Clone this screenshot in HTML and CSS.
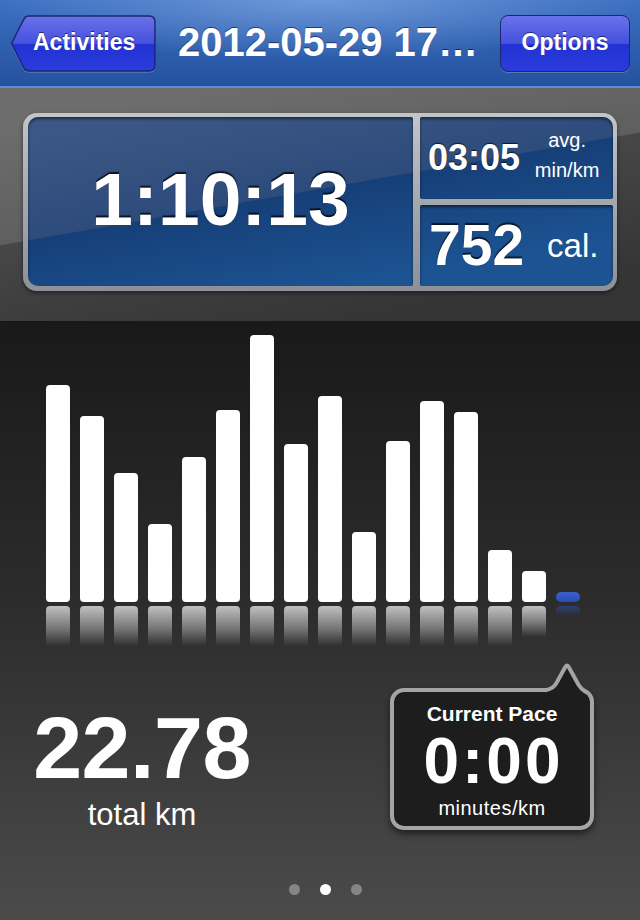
FILE: index.html
```html
<!DOCTYPE html>
<html lang="en">
<head>
<meta charset="utf-8">
<title>Activity 2012-05-29</title>
<link rel="stylesheet" href="styles.css">
</head>
<body>
<div class="screen">
  <header class="navbar">
    <a class="nav-btn back-btn">
      <svg class="back-shape" width="146" height="57" viewBox="0 0 146 57" aria-hidden="true">
        <defs>
          <linearGradient id="btnGrad" x1="0" y1="0" x2="0" y2="1">
            <stop offset="0" stop-color="#6a72ea"/>
            <stop offset="0.5" stop-color="#4550de"/>
            <stop offset="0.5" stop-color="#2232d2"/>
            <stop offset="1" stop-color="#2b3cdc"/>
          </linearGradient>
        </defs>
        <path d="M1.5 28.5 L14 3.8 Q15.5 1 19 1 L139 1 Q145 1 145 7 L145 50 Q145 56 139 56 L19 56 Q15.5 56 14 53.2 Z" fill="url(#btnGrad)" stroke="#1c2672" stroke-width="1.5"/>
      </svg>
      <span class="btn-label">Activities</span>
    </a>
    <h1 class="title">2012-05-29 17…</h1>
    <a class="nav-btn options-btn"><span class="btn-label">Options</span></a>
  </header>

  <section class="stats">
    <div class="panel">
      <div class="cell duration">1:10:13</div>
      <div class="cell pace">
        <span class="pace-val">03:05</span>
        <span class="pace-unit"><span>avg.</span><span>min/km</span></span>
      </div>
      <div class="cell calories">
        <span class="cal-val">752</span>
        <span class="cal-unit">cal.</span>
      </div>
    </div>
  </section>

  <section class="chart-area">
    <div class="chart">
      <div class="bar" style="height:217px"></div><div class="refl" style="height:40px"></div>
      <div class="bar" style="height:186px"></div><div class="refl" style="height:40px"></div>
      <div class="bar" style="height:129px"></div><div class="refl" style="height:40px"></div>
      <div class="bar" style="height:78px"></div><div class="refl" style="height:40px"></div>
      <div class="bar" style="height:145px"></div><div class="refl" style="height:40px"></div>
      <div class="bar" style="height:192px"></div><div class="refl" style="height:40px"></div>
      <div class="bar" style="height:267px"></div><div class="refl" style="height:40px"></div>
      <div class="bar" style="height:158px"></div><div class="refl" style="height:40px"></div>
      <div class="bar" style="height:206px"></div><div class="refl" style="height:40px"></div>
      <div class="bar" style="height:70px"></div><div class="refl" style="height:40px"></div>
      <div class="bar" style="height:161px"></div><div class="refl" style="height:40px"></div>
      <div class="bar" style="height:201px"></div><div class="refl" style="height:40px"></div>
      <div class="bar" style="height:190px"></div><div class="refl" style="height:40px"></div>
      <div class="bar" style="height:52px"></div><div class="refl" style="height:40px"></div>
      <div class="bar" style="height:31px"></div><div class="refl" style="height:31px"></div>
      <div class="bar bar-current" style="height:10px"></div><div class="refl refl-current" style="height:10px"></div>
    </div>

    <div class="summary">
      <div class="distance">
        <div class="distance-val">22.78</div>
        <div class="distance-unit">total km</div>
      </div>
      <div class="bubble">
        <svg class="bubble-tail" width="60" height="42" viewBox="0 0 60 42" aria-hidden="true">
          <path d="M7 30 Q14 29 17 22 L25 7.5 Q27 3.5 29 7.5 L37 22 Q40 29 48.5 33.5 L44 41 L7 41 Z" fill="#1d1d1d"/>
          <path d="M5 30.2 Q14 29 17 22 L25 7.5 Q27 3.5 29 7.5 L37 22 Q40 29 48.5 33.5" fill="none" stroke="#a4a4a4" stroke-width="4" stroke-linejoin="round"/>
        </svg>
        <div class="bubble-title">Current Pace</div>
        <div class="bubble-val">0:00</div>
        <div class="bubble-unit">minutes/km</div>
      </div>
    </div>

    <div class="dots">
      <span class="dot"></span>
      <span class="dot active"></span>
      <span class="dot"></span>
    </div>
  </section>
</div>
</body>
</html>
```

FILE: styles.css
```css
html, body {
  margin: 0;
  padding: 0;
  background: #1a1a1a;
}

body {
  font-family: "Liberation Sans", Arial, Helvetica, sans-serif;
  color: #fff;
}

.screen {
  width: 640px;
  height: 920px;
  overflow: hidden;
  display: flex;
  flex-direction: column;
}

/* ---------- Nav bar ---------- */
.navbar {
  height: 71px;
  flex: 0 0 auto;
  border-bottom: 2px solid #5a8edb;
  display: flex;
  align-items: flex-start;
  padding: 15px 10px 0 10px;
  box-sizing: content-box;
  width: 620px;
  background:
    radial-gradient(ellipse 330px 60px at 50% 0, rgba(150, 185, 235, 0.55), rgba(150, 185, 235, 0) 100%),
    linear-gradient(180deg, #3d70c2 0%, #3062b2 45%, #24529f 100%);
}

.nav-btn {
  display: block;
  height: 57px;
  position: relative;
  color: #fff;
  text-decoration: none;
  flex: 0 0 auto;
}

.btn-label {
  position: relative;
  display: block;
  font-size: 23px;
  font-weight: bold;
  line-height: 54px;
  text-shadow: 0 -1px 0 rgba(0, 0, 20, 0.55);
}

.back-btn {
  width: 146px;
}

.back-shape {
  position: absolute;
  left: 0;
  top: 0;
  filter: drop-shadow(0 1px 0 rgba(255, 255, 255, 0.22));
}

.back-btn .btn-label {
  padding-left: 23px;
}

.options-btn {
  width: 130px;
  box-sizing: border-box;
  border: 1.5px solid #1c2672;
  border-radius: 8px;
  text-align: center;
  background: linear-gradient(180deg, #6a72ea 0%, #4550de 50%, #2232d2 50%, #2b3cdc 100%);
  box-shadow: 0 1px 0 rgba(255, 255, 255, 0.22);
}

.options-btn .btn-label {
  line-height: 52px;
}

.title {
  flex: 1 1 auto;
  margin: 0;
  text-align: center;
  font-size: 40px;
  font-weight: bold;
  line-height: 54px;
  white-space: nowrap;
  text-shadow: 0 -1px 0 rgba(0, 0, 30, 0.55);
}

/* ---------- Stats panel ---------- */
.stats {
  height: 233px;
  flex: 0 0 auto;
  box-sizing: border-box;
  padding: 25px 23px 0 23px;
  background: linear-gradient(170deg, #6d6d6d 12%, #5f5f5f 23.7%, #474747 23.8%, #353535 37%) fixed;
}

.panel {
  display: grid;
  grid-template-columns: 385px 193px;
  grid-template-rows: 82px 81px;
  column-gap: 7px;
  row-gap: 6px;
  padding: 4px 4px 5px 5px;
  border-radius: 14px;
  background: linear-gradient(180deg, #c3c5c9 0%, #a4a7ac 50%, #8d9096 100%);
  box-shadow: 0 2px 4px rgba(0, 0, 0, 0.45);
}

.cell {
  background: linear-gradient(170deg, #3b5785 14%, #2d4b7b 23.7%, #163f78 23.8%, #1c5392 33.6%) fixed;
  box-shadow: inset 0 2px 3px rgba(0, 0, 0, 0.5);
  display: flex;
  align-items: center;
  font-weight: bold;
}

.duration {
  grid-row: 1 / span 2;
  grid-column: 1;
  border-radius: 10px 2px 2px 10px;
  justify-content: center;
  font-size: 75px;
  line-height: 75px;
  padding-bottom: 4px;
  box-sizing: border-box;
  text-shadow: 0 -2px 1px rgba(0, 0, 0, 0.75);
}

.pace {
  grid-column: 2;
  grid-row: 1;
  border-radius: 2px 10px 2px 2px;
  padding-left: 8px;
}

.pace-val {
  font-size: 36px;
  line-height: 36px;
  text-shadow: 0 -1px 1px rgba(0, 0, 0, 0.7);
}

.pace-unit {
  display: flex;
  flex-direction: column;
  align-items: center;
  width: 66px;
  margin-left: 14px;
  margin-bottom: 6px;
  font-weight: normal;
  font-size: 20px;
  line-height: 30px;
}

.calories {
  grid-column: 2;
  grid-row: 2;
  border-radius: 2px 2px 10px 2px;
  padding-left: 9px;
}

.cal-val {
  font-size: 57px;
  line-height: 57px;
  text-shadow: 0 -2px 1px rgba(0, 0, 0, 0.7);
}

.cal-unit {
  margin-left: 23px;
  font-weight: normal;
  font-size: 33px;
  line-height: 33px;
}

/* ---------- Chart ---------- */
.chart-area {
  flex: 1 1 auto;
  background: linear-gradient(180deg, #191919 0%, #2c2c2c 47%, #4b4b4b 100%);
}

.chart {
  display: grid;
  grid-template-columns: repeat(16, 24px);
  grid-template-rows: 267px 44px;
  grid-auto-flow: column;
  column-gap: 10px;
  padding: 14px 0 0 46px;
}

.bar {
  align-self: end;
  background: #fff;
  border-radius: 4px;
}

.refl {
  align-self: start;
  margin-top: 4px;
  border-radius: 4px 4px 0 0;
  background: linear-gradient(180deg, rgba(255, 255, 255, 0.7) 0%, rgba(255, 255, 255, 0.35) 55%, rgba(255, 255, 255, 0) 100%);
}

.bar-current {
  border-radius: 5px;
  background: linear-gradient(180deg, #3b60cc 0%, #2a4db8 100%);
}

.refl-current {
  border-radius: 5px 5px 0 0;
  background: linear-gradient(180deg, rgba(45, 78, 180, 0.55) 0%, rgba(45, 78, 180, 0) 100%);
}

/* ---------- Summary ---------- */
.summary {
  display: flex;
  justify-content: space-between;
  align-items: flex-start;
  padding: 42px 46px 0 32px;
}

.distance {
  width: 220px;
  margin-top: 11px;
  text-align: center;
}

.distance-val {
  font-size: 88px;
  font-weight: bold;
  line-height: 98px;
  letter-spacing: -0.5px;
}

.distance-unit {
  font-size: 31px;
  line-height: 35px;
}

.bubble {
  position: relative;
  width: 204px;
  height: 142px;
  box-sizing: border-box;
  border: 4px solid #a4a4a4;
  border-radius: 14px;
  background: #1d1d1d;
  box-shadow: 0 4px 6px rgba(0, 0, 0, 0.5);
  text-align: center;
  padding-top: 10px;
}

.bubble-tail {
  position: absolute;
  left: 146px;
  top: -32px;
  overflow: visible;
}

.bubble-title {
  position: relative;
  font-size: 21px;
  font-weight: bold;
  line-height: 23.5px;
}

.bubble-val {
  font-size: 64px;
  font-weight: bold;
  line-height: 71.5px;
  letter-spacing: 3px;
  padding-left: 3px;
}

.bubble-unit {
  font-size: 20px;
  line-height: 22.5px;
  letter-spacing: 0.5px;
}

/* ---------- Page dots ---------- */
.dots {
  display: flex;
  justify-content: center;
  gap: 20px;
  padding-left: 11px;
  margin-top: 52px;
}

.dot {
  width: 11px;
  height: 11px;
  border-radius: 50%;
  background: #858585;
}

.dot.active {
  background: #fff;
}
```
